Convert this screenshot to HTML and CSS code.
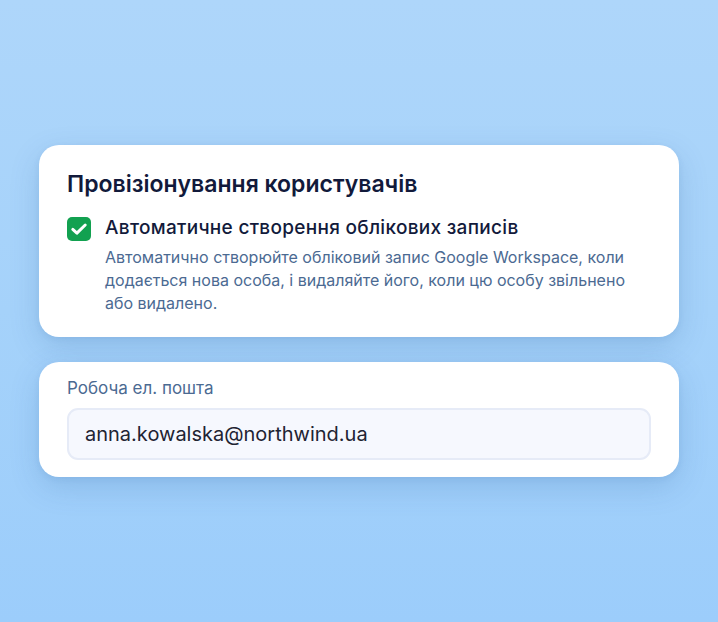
FILE: index.html
```html
<!DOCTYPE html>
<html lang="uk">
<head>
    <meta charset="UTF-8">
    <meta name="viewport" content="width=device-width, initial-scale=1.0">
    <title>Провізіонування користувачів</title>
    <link rel="stylesheet" href="styles.css">
</head>
<body>
    <main class="page">
        <!-- Provisioning settings -->
        <section class="card card-provision">
            <h2 class="card-title">Провізіонування користувачів</h2>
            <div class="option">
                <span class="checkbox">
                    <svg width="18" height="18" viewBox="0 0 18 18" fill="none">
                        <path d="M2.8 9.4 L6.9 13.1 L15.2 5" stroke="#fff" stroke-width="3" stroke-linecap="round" stroke-linejoin="round"/>
                    </svg>
                </span>
                <div class="option-text">
                    <div class="option-label">Автоматичне створення облікових записів</div>
                    <p class="option-desc">Автоматично створюйте обліковий запис Google Workspace, коли додається нова особа, і видаляйте його, коли цю особу звільнено або видалено.</p>
                </div>
            </div>
        </section>

        <!-- Work email -->
        <section class="card card-email">
            <label class="field-label" for="work-email">Робоча ел. пошта</label>
            <div class="field-input" id="work-email">anna.kowalska@northwind.ua</div>
        </section>
    </main>
</body>
</html>
```

FILE: styles.css
```css
* {
    box-sizing: border-box;
}

body {
    margin: 0;
    height: 622px;
    overflow: hidden;
    font-family: Inter, "Noto Sans", "DejaVu Sans", sans-serif;
    background: linear-gradient(180deg, #aed6fa 0%, #a5d2fa 50%, #9ccdfb 100%);
}

.page {
    display: flex;
    flex-direction: column;
    gap: 25px;
    padding: 145px 39px 0 39px;
}

.card {
    background-color: #ffffff;
    border-radius: 20px;
    box-shadow: 0 10px 30px rgba(40, 90, 150, 0.18), 0 2px 6px rgba(40, 90, 150, 0.08);
}

.card-provision {
    padding: 24px 28px 22px 28px;
}

.card-title {
    margin: 0 0 16px 0;
    font-size: 23px;
    line-height: 30px;
    font-weight: 600;
    color: #121a3b;
}

.option {
    display: flex;
    gap: 14px;
    align-items: flex-start;
}

.checkbox {
    flex: none;
    width: 24px;
    height: 24px;
    margin-top: 2px;
    border-radius: 5px;
    background-color: #12a150;
    display: flex;
    align-items: center;
    justify-content: center;
}

.option-text {
    flex: 1;
}

.option-label {
    font-size: 19px;
    line-height: 26px;
    font-weight: 500;
    letter-spacing: 0.3px;
    color: #121a3b;
}

.option-desc {
    margin: 5px 0 0 0;
    font-size: 16px;
    line-height: 23px;
    color: #4b6a92;
}

.card-email {
    padding: 15px 28px 17px 28px;
    display: flex;
    flex-direction: column;
    gap: 8px;
}

.field-label {
    font-size: 17px;
    line-height: 23px;
    color: #4b6a92;
}

.field-input {
    height: 52px;
    padding: 0 16px;
    display: flex;
    align-items: center;
    border: 2px solid #e6ebf7;
    border-radius: 11px;
    background-color: #f6f8fe;
    font-size: 20px;
    color: #1f2433;
}
```
